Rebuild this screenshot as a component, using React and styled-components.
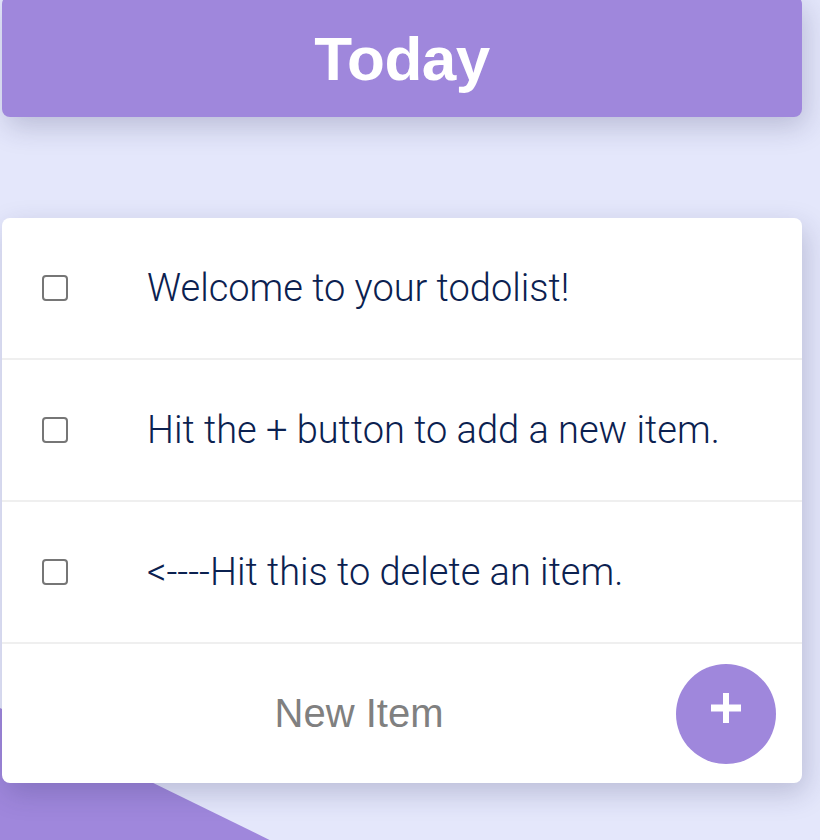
import React from "react";
import styled, { createGlobalStyle } from "styled-components";

const GlobalStyle = createGlobalStyle`
  html, body {
    margin: 0;
    padding: 0;
    background: #e4e7fb;
    font-family: "Liberation Sans", Arial, sans-serif;
    overflow: hidden;
  }
`;

const purple = "#9f87dc";
const shadow = "4px 10px 28px rgba(40, 40, 90, 0.22)";

const Page = styled.div`
  position: relative;
  width: 820px;
  height: 840px;
  overflow: hidden;
`;

const Corner = styled.div`
  position: absolute;
  left: 0;
  top: 0;
  width: 820px;
  height: 840px;
  background: ${purple};
  clip-path: polygon(0 708px, 290px 850px, 0 850px);
`;

const Column = styled.div`
  position: relative;
  width: 800px;
  margin-left: 2px;
  display: flex;
  flex-direction: column;
  gap: 101px;
`;

const Heading = styled.div`
  height: 121px;
  margin-top: -4px;
  background: ${purple};
  border-radius: 8px;
  box-shadow: ${shadow};
  display: flex;
  align-items: center;
  justify-content: center;

  h1 {
    margin: 0;
    padding-top: 4px;
    color: #fff;
    font-family: "Liberation Sans", Arial, sans-serif;
    font-weight: 700;
    font-size: 62px;
    letter-spacing: -0.5px;
  }
`;

const Card = styled.div`
  background: #fff;
  border-radius: 8px;
  box-shadow: ${shadow};
  display: flex;
  flex-direction: column;
`;

const Row = styled.div`
  height: 140px;
  display: flex;
  align-items: center;
  border-bottom: 2px solid #efefef;
`;

const Check = styled.span`
  width: 26px;
  height: 26px;
  box-sizing: border-box;
  margin-left: 40px;
  margin-right: 79px;
  border: 2px solid #767676;
  border-radius: 4px;
  background: #fff;
  flex-shrink: 0;
`;

const Label = styled.p`
  margin: 0;
  color: #0b2150;
  font-family: Roboto, "Liberation Sans", sans-serif;
  font-weight: 300;
  font-size: 38px;
`;

const Form = styled.div`
  height: 139px;
  display: flex;
  align-items: center;
`;

const Input = styled.div`
  flex: 1;
  padding-left: 40px;
  text-align: center;
  color: #808080;
  font-family: "Liberation Sans", Arial, sans-serif;
  font-size: 40px;
`;

const AddButton = styled.button`
  width: 100px;
  height: 100px;
  margin-right: 26px;
  border: none;
  border-radius: 50%;
  background: ${purple};
  display: flex;
  align-items: center;
  justify-content: center;
  padding: 0 0 12px 0;
`;

const items = [
  "Welcome to your todolist!",
  "Hit the + button to add a new item.",
  "<----Hit this to delete an item.",
];

export default function App() {
  return (
    <>
      <GlobalStyle />
      <Page>
        <Corner />
        <Column>
          <Heading>
            <h1>Today</h1>
          </Heading>
          <Card>
            {items.map((text) => (
              <Row key={text}>
                <Check />
                <Label>{text}</Label>
              </Row>
            ))}
            <Form>
              <Input>New Item</Input>
              <AddButton>
                <svg width="30" height="30" viewBox="0 0 30 30">
                  <rect x="0" y="11.5" width="30" height="7" fill="#fff" />
                  <rect x="12" y="0" width="6" height="30" fill="#fff" />
                </svg>
              </AddButton>
            </Form>
          </Card>
        </Column>
      </Page>
    </>
  );
}
